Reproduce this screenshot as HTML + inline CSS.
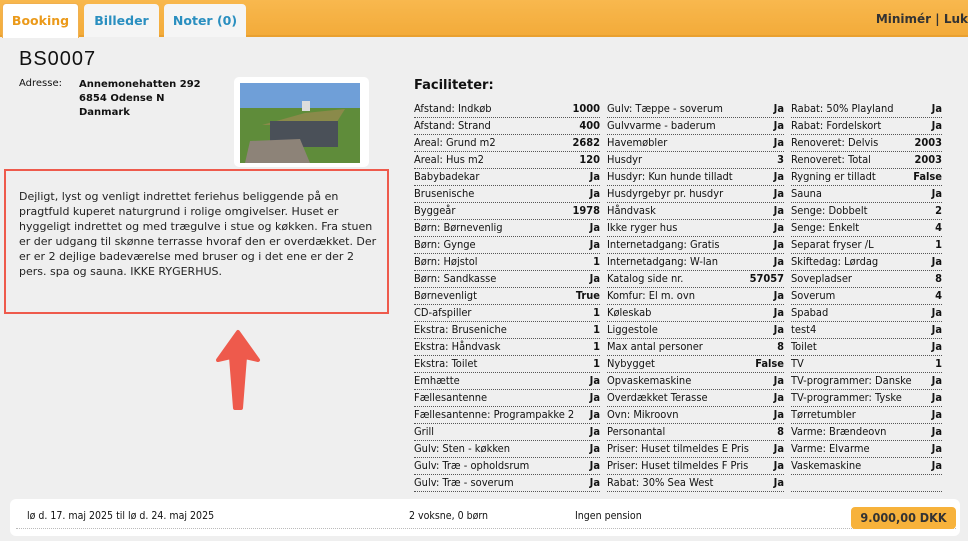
<!DOCTYPE html>
<html><head><meta charset="utf-8"><style>
*{margin:0;padding:0;box-sizing:border-box}
body{width:968px;height:541px;overflow:hidden;background:#efefef;font-family:"DejaVu Sans","Liberation Sans",sans-serif;color:#111;position:relative}
.top{position:absolute;left:0;top:0;width:968px;height:37px;background:linear-gradient(#f8b84e,#f3ab3a);border-bottom:2px solid #e9a030}
.tab{position:absolute;top:4px;height:33px;background:#f5f5f5;border-radius:4px 4px 0 0;font-weight:bold;font-size:12.5px;color:#2a8fc0;text-align:center;line-height:33px}
.abs{position:absolute;white-space:nowrap}
.r{position:absolute;height:17px;border-bottom:1px dotted #555;font-family:"DejaVu Sans Condensed","DejaVu Sans",sans-serif;font-size:11px;line-height:16px}
.r b{position:absolute;right:0;top:0}
.ft{position:absolute;white-space:nowrap;top:510px;font-family:'DejaVu Sans Condensed','DejaVu Sans',sans-serif;font-size:10.5px}
</style></head><body>
<div class="top"></div>
<div class="tab" style="left:2px;width:77px;background:#fff;color:#eb9a1a;top:3px;height:35px;border:1px solid #f0b050;border-bottom:none">Booking</div>
<div class="tab" style="left:84px;width:75px">Billeder</div>
<div class="tab" style="left:164px;width:82px">Noter (0)</div>
<div class="abs" style="right:0;top:12px;font-size:12px;font-weight:bold;color:#333">Minimér | Luk</div>
<div class="abs" style="left:19px;top:48px;font-family:'Liberation Sans',sans-serif;font-size:20px;letter-spacing:1px">BS0007</div>
<div class="abs" style="left:19px;top:78px;font-size:10px">Adresse:</div>
<div class="abs" style="left:79px;top:78px;font-size:10px;font-weight:bold;line-height:14px">Annemonehatten 292<br>6854 Odense N<br>Danmark</div>
<div class="abs" style="left:234px;top:77px;width:135px;height:90px;background:#fff;border-radius:5px"></div>
<svg class="abs" style="left:240px;top:83px" width="120" height="80" viewBox="0 0 120 80">
<rect width="120" height="30" fill="#6f9fd8"/><rect y="25" width="120" height="55" fill="#5f8c3a"/>
<polygon points="22,42 65,30 105,26 95,42" fill="#8a8a4a"/><rect x="30" y="38" width="68" height="26" fill="#4a5058"/>
<polygon points="10,58 60,56 70,80 5,80" fill="#8d8378"/><rect x="62" y="18" width="8" height="10" fill="#ddd"/></svg>
<div class="abs" style="left:4px;top:169px;width:385px;height:145px;border:2px solid #ee5a4c"></div>
<div class="abs" style="left:19px;top:189px;font-size:11px;line-height:15px;color:#222;white-space:normal;width:360px">Dejligt, lyst og venligt indrettet feriehus beliggende på en pragtfuld kuperet naturgrund i rolige omgivelser. Huset er hyggeligt indrettet og med trægulve i stue og køkken. Fra stuen er der udgang til skønne terrasse hvoraf den er overdækket. Der er er 2 dejlige badeværelse med bruser og i det ene er der 2 pers. spa og sauna. IKKE RYGERHUS.</div>
<svg class="abs" style="left:210px;top:328px" width="60" height="90" viewBox="0 0 60 90"><polygon points="28,4 48,32 35,29 31,80 25,80 21,29 8,32" fill="#ee5a4c" stroke="#ee5a4c" stroke-width="4" stroke-linejoin="round"/></svg>
<div class="abs" style="left:414px;top:78px;font-size:13px;font-weight:bold">Faciliteter:</div>
<div id="f"></div>
<div class="abs" style="left:10px;top:499px;width:950px;height:37px;background:#fff;border-radius:6px"></div>
<div class="abs" style="left:16px;top:528px;width:940px;border-top:1px dotted #bbb"></div>
<div class="ft" style="left:27px">lø d. 17. maj 2025 til lø d. 24. maj 2025</div>
<div class="ft" style="left:409px">2 voksne, 0 børn</div>
<div class="ft" style="left:575px">Ingen pension</div>
<div class="abs" style="left:851px;top:507px;width:105px;height:22px;background:#f7b23b;border-radius:4px;font-weight:bold;font-size:12.5px;line-height:22px;text-align:center;color:#333;font-family:'DejaVu Sans Condensed','DejaVu Sans',sans-serif">9.000,00 DKK</div>
<script>
var c=[[414,186,["Afstand: Indkøb","1000","Afstand: Strand","400","Areal: Grund m2","2682","Areal: Hus m2","120","Babybadekar","Ja","Brusenische","Ja","Byggeår","1978","Børn: Børnevenlig","Ja","Børn: Gynge","Ja","Børn: Højstol","1","Børn: Sandkasse","Ja","Børnevenligt","True","CD-afspiller","1","Ekstra: Bruseniche","1","Ekstra: Håndvask","1","Ekstra: Toilet","1","Emhætte","Ja","Fællesantenne","Ja","Fællesantenne: Programpakke 2","Ja","Grill","Ja","Gulv: Sten - køkken","Ja","Gulv: Træ - opholdsrum","Ja","Gulv: Træ - soverum","Ja"]],
[607,177,["Gulv: Tæppe - soverum","Ja","Gulvvarme - baderum","Ja","Havemøbler","Ja","Husdyr","3","Husdyr: Kun hunde tilladt","Ja","Husdyrgebyr pr. husdyr","Ja","Håndvask","Ja","Ikke ryger hus","Ja","Internetadgang: Gratis","Ja","Internetadgang: W-lan","Ja","Katalog side nr.","57057","Komfur: El m. ovn","Ja","Køleskab","Ja","Liggestole","Ja","Max antal personer","8","Nybygget","False","Opvaskemaskine","Ja","Overdækket Terasse","Ja","Ovn: Mikroovn","Ja","Personantal","8","Priser: Huset tilmeldes E Pris","Ja","Priser: Huset tilmeldes F Pris","Ja","Rabat: 30% Sea West","Ja"]],
[791,151,["Rabat: 50% Playland","Ja","Rabat: Fordelskort","Ja","Renoveret: Delvis","2003","Renoveret: Total","2003","Rygning er tilladt","False","Sauna","Ja","Senge: Dobbelt","2","Senge: Enkelt","4","Separat fryser /L","1","Skiftedag: Lørdag","Ja","Sovepladser","8","Soverum","4","Spabad","Ja","test4","Ja","Toilet","Ja","TV","1","TV-programmer: Danske","Ja","TV-programmer: Tyske","Ja","Tørretumbler","Ja","Varme: Brændeovn","Ja","Varme: Elvarme","Ja","Vaskemaskine","Ja","",""]]];
var h="";c.forEach(function(k){for(var i=0;i<k[2].length/2;i++){h+='<div class="r" style="left:'+k[0]+'px;width:'+k[1]+'px;top:'+(101+i*17)+'px">'+k[2][2*i]+'<b>'+k[2][2*i+1]+'</b></div>';}});
document.getElementById("f").innerHTML=h;
</script>
</body></html>
